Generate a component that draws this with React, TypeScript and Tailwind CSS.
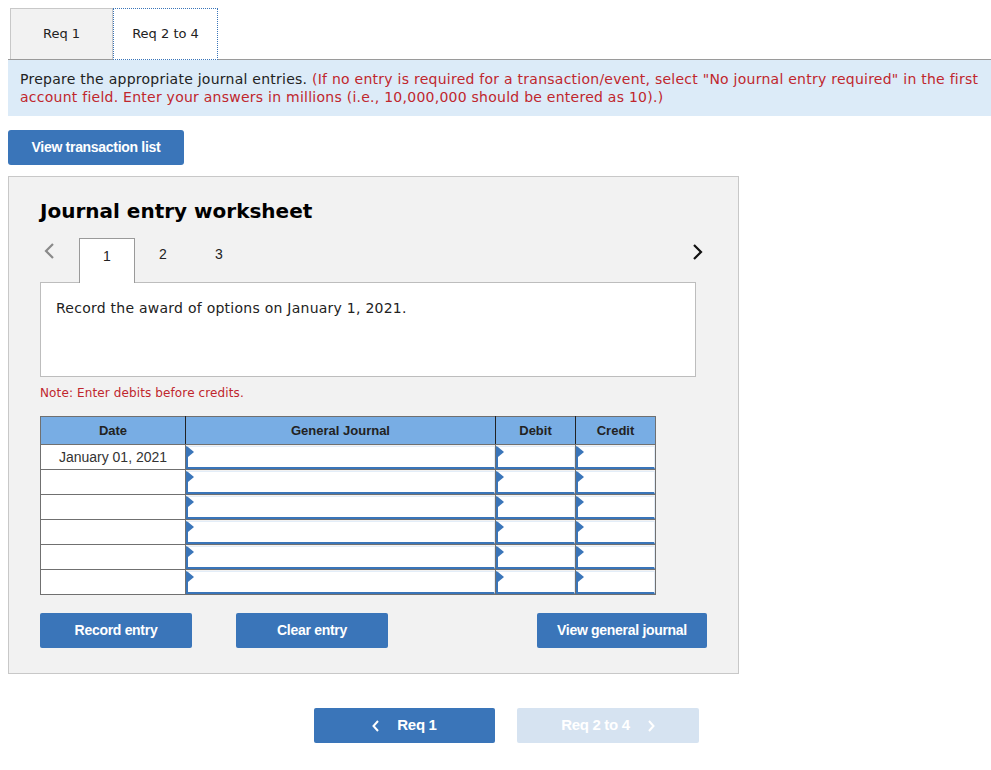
const verdana = { fontFamily: '"DejaVu Sans", Verdana, sans-serif' };
const arial = { fontFamily: '"Liberation Sans", Arial, sans-serif' };

const Arrow = () => (
  <span className="absolute left-0 top-0 w-0 h-0 border-t-[5px] border-b-[5px] border-l-[6px] border-t-transparent border-b-transparent border-l-[#3a75b9]"></span>
);

const InputCell = () => (
  <td className="border border-[#707070] p-0 h-[25px]">
    <div className="relative h-[23px] border-l-2 border-b-2 border-t border-r border-l-[#3a75b9] border-b-[#3a75b9] border-t-[#e3edf8] border-r-[#e3edf8] bg-white">
      <Arrow />
    </div>
  </td>
);

const App = () => {
  const rows = [0, 1, 2, 3, 4, 5];
  return (
    <div className="bg-white w-[991px] h-[770px] pt-2 text-[#222]" style={verdana}>
      {/* requirement tabs */}
      <div className="flex ml-2 pl-[2px] border-b border-[#9a9a9a]">
        <div className="w-[103px] h-[51px] flex items-center justify-center bg-[#f2f2f2] border border-[#c8c8c8] border-b-0 text-[13px]">
          Req 1
        </div>
        <div className="w-[105px] h-[52px] -mb-px flex items-center justify-center bg-white border border-dotted border-[#3a75b9] text-[13px]">
          Req 2 to 4
        </div>
      </div>

      <div className="ml-2 bg-[#dcebf8] px-3 pt-[10px] pb-[10px] text-[14px] leading-[18px] tracking-[0.25px]">
        Prepare the appropriate journal entries.{" "}
        <span className="text-[#c0262d]">
          (If no entry is required for a transaction/event, select "No journal entry required" in the first account field. Enter your answers in millions (i.e., 10,000,000 should be entered as 10).)
        </span>
      </div>

      <div className="ml-2 mt-[14px]">
        <button className="w-[176px] h-[35px] bg-[#3a75b9] rounded-[3px] text-white font-bold text-[14px] tracking-[-0.3px]" style={arial}>
          View transaction list
        </button>
      </div>

      {/* worksheet */}
      <div className="ml-2 mt-[11px] w-[731px] h-[498px] bg-[#f2f2f2] border border-[#c8c8c8] pl-[31px]">
        <h2 className="mt-[20px] text-[20px] font-bold text-black leading-[28px]">Journal entry worksheet</h2>

        <div className="mt-[12px] flex items-end h-[45px] relative w-[656px]">
          <span className="absolute left-[3px] top-[4px]">
            <svg width="12" height="20" viewBox="0 0 12 20"><path d="M10 3 L3 10 L10 17" stroke="#8a8a8a" strokeWidth="2.2" fill="none" /></svg>
          </span>
          <div className="ml-[39px] w-[56px] h-[45px] bg-white border border-[#9a9a9a] border-b-0 -mb-px relative z-10 flex items-start justify-center pt-[7px] text-[14px]" style={arial}>
            1
          </div>
          <div className="w-[56px] h-[45px] flex items-start justify-center pt-[7px] text-[14px]" style={arial}>2</div>
          <div className="w-[56px] h-[45px] flex items-start justify-center pt-[7px] text-[14px]" style={arial}>3</div>
          <span className="absolute right-[-7px] top-[5px]">
            <svg width="12" height="20" viewBox="0 0 12 20"><path d="M3 3 L10 10 L3 17" stroke="#111" strokeWidth="2.2" fill="none" /></svg>
          </span>
        </div>

        <div className="w-[656px] h-[95px] bg-white border border-[#bdbdbd] px-[15px] pt-[15px] text-[14px] tracking-[0.25px]">
          Record the award of options on January 1, 2021.
        </div>

        <p className="mt-[7px] text-[12px] text-[#c0262d] tracking-[0.12px]">Note: Enter debits before credits.</p>

        <table className="mt-[14px] border-collapse text-[13px]" style={arial}>
          <thead>
            <tr className="bg-[#78ade4] h-[28px]">
              <th className="w-[145px] border border-[#707070] border-r-[#222] font-bold text-[#222]">Date</th>
              <th className="w-[310px] border border-[#707070] border-r-[#222] font-bold text-[#222]">General Journal</th>
              <th className="w-[80px] border border-[#707070] border-r-[#222] font-bold text-[#222]">Debit</th>
              <th className="w-[80px] border border-[#707070] font-bold text-[#222]">Credit</th>
            </tr>
          </thead>
          <tbody>
            {rows.map((r) => (
              <tr key={r} className="h-[25px]">
                <td className="border border-[#707070] bg-white text-center text-[#333] text-[14px] p-0">
                  {r === 0 ? "January 01, 2021" : ""}
                </td>
                <InputCell />
                <InputCell />
                <InputCell />
              </tr>
            ))}
          </tbody>
        </table>

        <div className="mt-[18px] flex text-white font-bold text-[14px] tracking-[-0.3px]" style={arial}>
          <button className="shrink-0 w-[152px] h-[35px] bg-[#3a75b9] rounded-[2px]">Record entry</button>
          <button className="shrink-0 ml-[44px] w-[152px] h-[35px] bg-[#3a75b9] rounded-[2px]">Clear entry</button>
          <button className="shrink-0 ml-[149px] w-[170px] h-[35px] bg-[#3a75b9] rounded-[2px]">View general journal</button>
        </div>
      </div>

      {/* bottom navigation */}
      <div className="mt-[34px] flex pl-[314px] gap-[22px] text-[15px] font-bold text-white tracking-[-0.3px]" style={arial}>
        <button className="w-[181px] h-[35px] bg-[#3a75b9] rounded-[2px] flex items-center justify-center gap-[17px]">
          <svg width="8" height="12" viewBox="0 0 8 12"><path d="M6 1 L1.5 6 L6 11" stroke="#fff" strokeWidth="2" fill="none" /></svg>
          <span>Req 1</span>
        </button>
        <button className="w-[182px] h-[35px] bg-[#d6e3f1] rounded-[2px] flex items-center justify-center gap-[17px]">
          <span>Req 2 to 4</span>
          <svg width="8" height="12" viewBox="0 0 8 12"><path d="M2 1 L6.5 6 L2 11" stroke="#fff" strokeWidth="2" fill="none" /></svg>
        </button>
      </div>
    </div>
  );
};

export default App;
